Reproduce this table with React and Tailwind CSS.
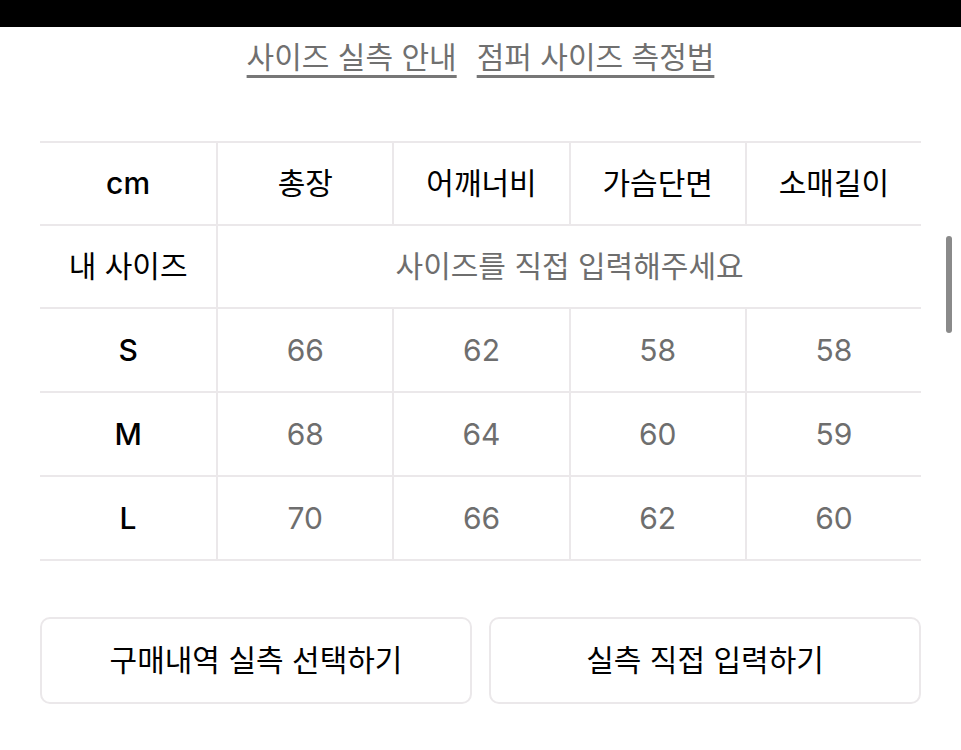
const headers = ["cm", "총장", "어깨너비", "가슴단면", "소매길이"];
const rows = [
  ["S", "66", "62", "58", "58"],
  ["M", "68", "64", "60", "59"],
  ["L", "70", "66", "62", "60"],
];

function Cell({ children, first, className = "" }) {
  return (
    <div
      className={`flex items-center justify-center border-b-2 border-[#ebe8ea] ${first ? "" : "border-l-2"} ${className}`}
    >
      {children}
    </div>
  );
}

export default function App() {
  return (
    <div
      className="relative w-[961px] h-[750px] bg-white overflow-hidden"
      style={{ fontFamily: 'Inter, "Noto Sans CJK KR", sans-serif' }}
    >
      <div className="h-[27px] bg-black" />

      <div className="flex justify-center gap-[20px] pt-[11px] text-[30px] leading-[38px] text-[#707070]">
        <span className="underline decoration-[3px] underline-offset-[7px] decoration-[#777]">사이즈 실측 안내</span>
        <span className="underline decoration-[3px] underline-offset-[7px] decoration-[#777]">점퍼 사이즈 측정법</span>
      </div>

      <div className="mx-[40px] mt-[65px] grid grid-cols-5 border-t-2 border-[#ebe8ea]">
        {headers.map((h, i) => (
          <Cell key={h} first={i === 0} className={`h-[83px] text-[30px] text-black ${i === 0 ? "font-medium" : ""}`}>
            {h}
          </Cell>
        ))}
        <Cell first className="h-[83px] text-[30px] text-black">
          내 사이즈
        </Cell>
        <Cell className="h-[83px] col-span-4 text-[30px] text-[#6e6e6e]">사이즈를 직접 입력해주세요</Cell>
        {rows.map((r) =>
          r.map((v, i) => (
            <Cell
              key={r[0] + i}
              first={i === 0}
              className={i === 0 ? "h-[84px] text-[30px] font-medium text-black" : "h-[84px] text-[30px] text-[#6e6e6e]"}
            >
              {v}
            </Cell>
          ))
        )}
      </div>

      <div className="mx-[40px] mt-[56px] flex gap-[17px]">
        <button className="flex-1 h-[87px] rounded-[10px] border-2 border-[#ebe8ea] bg-white text-[30px] text-black">
          구매내역 실측 선택하기
        </button>
        <button className="flex-1 h-[87px] rounded-[10px] border-2 border-[#ebe8ea] bg-white text-[30px] text-black">
          실측 직접 입력하기
        </button>
      </div>

      <div className="absolute left-[946px] top-[236px] w-[6px] h-[97px] rounded-full bg-[#8a8a8a]" />
    </div>
  );
}
